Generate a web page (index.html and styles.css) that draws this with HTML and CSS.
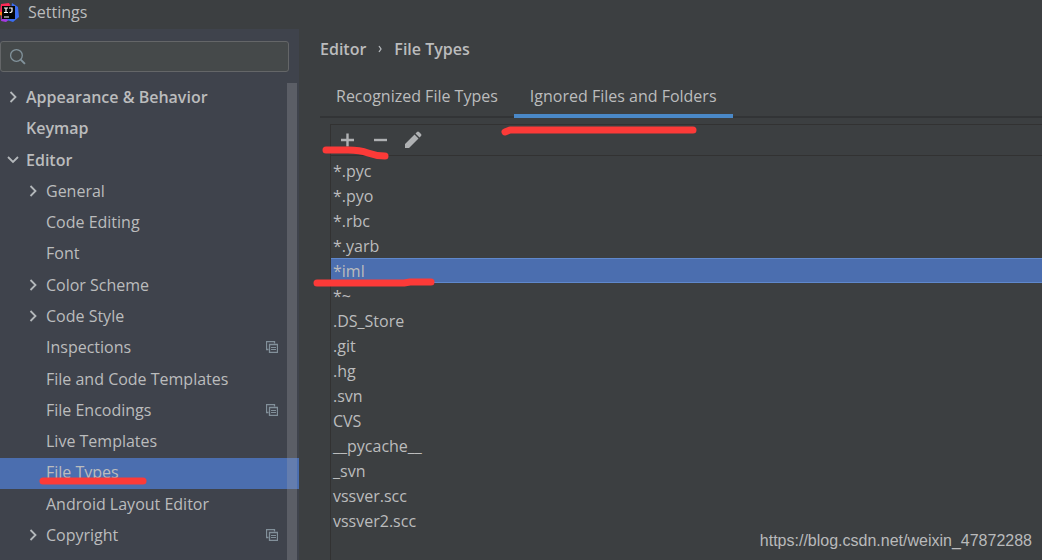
FILE: index.html
```html
<!DOCTYPE html>
<html lang="en">
<head>
<meta charset="utf-8">
<meta name="viewport" content="width=device-width, initial-scale=1">
<title>Settings</title>
<link rel="stylesheet" href="styles.css">
</head>
<body>
<svg class="defs" aria-hidden="true">
  <symbol id="right" viewBox="0 0 12 12"><path d="M3.500 1l5 5-5 5" fill="none" stroke="#b4b8bb" stroke-width="1.800"/></symbol>
  <symbol id="down" viewBox="0 0 12 12"><path d="M1 3l5 5 5-5" fill="none" stroke="#b4b8bb" stroke-width="1.800"/></symbol>
  <symbol id="copy" viewBox="0 0 12 12"><path d="M2.500 8.500H.5V.5h8v2" fill="none" stroke="#82909a" stroke-width="1.300"/><path d="M3.500 3.500h8v8h-8z" fill="none" stroke="#82909a" stroke-width="1.300"/><path d="M5 6.500h5M5 8.500h5" stroke="#82909a" stroke-width="1.200"/></symbol>
</svg>
<div class="window">
  <header class="titlebar">
    <svg class="logo" viewBox="0 0 20 20" aria-hidden="true">
      <path d="M1 2L9 1l4 8-8 9-4-2 1-4-2-2z" fill="#fe2857"/>
      <path d="M0 10l5 0v5l-5-2z" fill="#f97a12"/>
      <path d="M1 19l1-6 8 4-4 3z" fill="#a53ae0"/>
      <path d="M12 1l6 4 1 10-6 5-6-2 4-10z" fill="#3a6cf0"/>
      <path d="M2 4h13v13H2z" fill="#050505"/>
      <path d="M4 6h4M6 6v4.500M4 10.500h4M9 6h3v3q0 1.500-2.500 1.500M4 15h5" fill="none" stroke="#fff" stroke-width="1.200"/>
    </svg>
    <h1 class="title">Settings</h1>
  </header>
  <div class="body">
    <aside class="sidebar">
      <div class="search">
        <svg class="search-icon" viewBox="0 0 16 16" aria-hidden="true"><circle cx="7" cy="7" r="5.500" fill="none" stroke="#82939c" stroke-width="1.200"/><path d="M11 11l4 4" stroke="#82939c" stroke-width="1.800"/></svg>
        <input class="search-input" type="text" aria-label="Search settings">
      </div>
      <nav class="tree-pane" aria-label="Settings categories">
        <ul class="tree">
          <li><a class="row top" href="#"><svg class="arrow"><use href="#right"/></svg><span class="label">Appearance &amp; Behavior</span></a></li>
          <li><a class="row top" href="#"><span class="arrow"></span><span class="label">Keymap</span></a></li>
          <li><a class="row top" href="#"><svg class="arrow"><use href="#down"/></svg><span class="label">Editor</span></a></li>
          <li><a class="row" href="#"><svg class="arrow"><use href="#right"/></svg><span class="label">General</span></a></li>
          <li><a class="row" href="#"><span class="arrow"></span><span class="label">Code Editing</span></a></li>
          <li><a class="row" href="#"><span class="arrow"></span><span class="label">Font</span></a></li>
          <li><a class="row" href="#"><svg class="arrow"><use href="#right"/></svg><span class="label">Color Scheme</span></a></li>
          <li><a class="row" href="#"><svg class="arrow"><use href="#right"/></svg><span class="label">Code Style</span></a></li>
          <li><a class="row" href="#"><span class="arrow"></span><span class="label">Inspections</span><svg class="copy"><use href="#copy"/></svg></a></li>
          <li><a class="row" href="#"><span class="arrow"></span><span class="label">File and Code Templates</span></a></li>
          <li><a class="row" href="#"><span class="arrow"></span><span class="label">File Encodings</span><svg class="copy"><use href="#copy"/></svg></a></li>
          <li><a class="row" href="#"><span class="arrow"></span><span class="label">Live Templates</span></a></li>
          <li><a class="row selected" href="#" aria-current="page"><span class="arrow"></span><span class="label">File Types</span></a></li>
          <li><a class="row" href="#"><span class="arrow"></span><span class="label">Android Layout Editor</span></a></li>
          <li><a class="row" href="#"><svg class="arrow"><use href="#right"/></svg><span class="label">Copyright</span><svg class="copy"><use href="#copy"/></svg></a></li>
        </ul>
        <div class="scrollbar"></div>
      </nav>
    </aside>
    <main class="content">
      <div class="crumbs"><span>Editor</span><svg class="crumb-arrow" viewBox="0 0 6 10" aria-hidden="true"><path d="M2 2l2 3-2 3" fill="none" stroke="#b4b8bb" stroke-width="1.300"/></svg><span>File Types</span></div>
      <div class="tabs" role="tablist">
        <button class="tab" role="tab" aria-selected="false">Recognized File Types</button>
        <button class="tab active" role="tab" aria-selected="true">Ignored Files and Folders</button>
      </div>
      <section class="panel">
        <div class="toolbar">
          <button class="tool" aria-label="Add"><svg viewBox="0 0 20 20"><path d="M4 10h13M10.500 3.500v13" stroke="#afb1b3" stroke-width="2.400"/></svg></button>
          <button class="tool" aria-label="Remove"><svg viewBox="0 0 20 20"><path d="M4 10h13" stroke="#afb1b3" stroke-width="2.400"/></svg></button>
          <button class="tool" aria-label="Edit"><svg viewBox="0 0 20 20"><path d="M2 18v-4l9.500-9.500 4 4L6 18zM12.500 3.500l1.500-1.500q1-1 2 0l2 2q1 1 0 2l-1.500 1.500z" fill="#afb1b3"/></svg></button>
        </div>
        <ul class="files">
          <li>*.pyc</li>
          <li>*.pyo</li>
          <li>*.rbc</li>
          <li>*.yarb</li>
          <li class="chosen">*iml</li>
          <li>*~</li>
          <li>.DS_Store</li>
          <li>.git</li>
          <li>.hg</li>
          <li>.svn</li>
          <li>CVS</li>
          <li>__pycache__</li>
          <li>_svn</li>
          <li>vssver.scc</li>
          <li>vssver2.scc</li>
        </ul>
      </section>
    </main>
  </div>
  <svg class="marks" width="1042" height="560" aria-hidden="true">
    <g fill="none" stroke="#fc3a38" stroke-width="7" stroke-linecap="round" stroke-linejoin="round">
      <path d="M505 132l5-2h183"/>
      <path d="M326 150h22q12 0 20 3t17 3"/>
      <path d="M317 283h87l6-1h21"/>
      <path d="M43 481h100"/>
    </g>
  </svg>
  <div class="watermark">https://blog.csdn.net/weixin_47872288</div>
</div>
</body>
</html>
```
FILE: styles.css
```css
* { box-sizing: border-box; }
body {
  margin: 0;
  background: #3c3f41;
  color: #bbbcbd;
  font: 16px/20px "Open Sans", "Noto Sans", sans-serif;
}
ul { list-style: none; margin: 0; padding: 0; }
button { font: inherit; color: inherit; background: none; border: 0; padding: 0; }
a { color: inherit; text-decoration: none; }
.defs { position: absolute; width: 0; height: 0; }
.window {
  position: relative;
  display: flex;
  flex-direction: column;
  min-height: 100vh;
  overflow: hidden;
}
.titlebar { display: flex; align-items: center; gap: 8px; height: 29px; padding-bottom: 6px; }
.logo { width: 20px; height: 20px; }
.title { margin: 0; font-size: 16px; font-weight: 400; }
.body { display: flex; flex: 1; }
.sidebar {
  display: flex;
  flex-direction: column;
  flex: 0 0 299px;
  background: #3f434c;
}
.search {
  display: flex;
  align-items: center;
  gap: 8px;
  height: 31px;
  margin: 12px 10px 11px 0;
  padding: 0 8px;
  background: #45494a;
  border: 1px solid #646668;
  border-radius: 3px;
}
.search-icon { width: 17px; height: 17px; }
.search-input {
  flex: 1;
  min-width: 0;
  background: none;
  border: 0;
  outline: 0;
  color: inherit;
  font: inherit;
}
.tree-pane { position: relative; display: flex; flex: 1; }
.tree {
  display: flex;
  flex-direction: column;
  justify-content: space-between;
  flex: 1;
  padding-bottom: 8px;
}
.row {
  display: flex;
  align-items: center;
  gap: 7px;
  height: 31px;
  padding: 0 21px 3px 27px;
}
.row.top { padding-left: 7px; font-weight: 600; }
.row.selected { background: #4b6eaf; }
.arrow { flex: none; width: 12px; height: 12px; }
.label { flex: 1; }
.copy { width: 12px; height: 12px; }
.scrollbar {
  position: absolute;
  top: 0;
  right: 2px;
  bottom: 0;
  width: 10px;
  background: rgba(166, 166, 174, 0.28);
}
.content { display: flex; flex-direction: column; flex: 1; min-width: 0; padding-left: 21px; }
.crumbs {
  display: flex;
  align-items: center;
  gap: 11px;
  padding: 10px 0 18px;
  font-weight: 600;
}
.crumb-arrow { width: 6px; height: 10px; }
.tabs { display: flex; border-bottom: 2px solid #323436; }
.tab { height: 41px; margin-bottom: -2px; padding: 0 16px; border-bottom: 4px solid transparent; }
.tab.active { border-color: #4a88c7; }
.panel { flex: 1; margin: 6px 0 0 10px; border: solid #323232; border-width: 1px 0 0 1px; }
.toolbar {
  display: flex;
  align-items: center;
  gap: 13px;
  height: 31px;
  padding-left: 6px;
  border-bottom: 1px solid #323232;
}
.tool { width: 20px; height: 20px; }
.tool svg { display: block; width: 20px; height: 20px; }
.files { padding-top: 2px; }
.files li { height: 25px; padding: 2px; border: solid transparent; border-width: 1px 0; }
.files .chosen { background: #4b6eaf; border-color: #5f88cc; }
.marks { position: absolute; left: 0; top: 0; pointer-events: none; }
.watermark {
  position: absolute;
  right: 10px;
  bottom: 9px;
  color: #b9babb;
  font: 16px/20px "Liberation Sans", sans-serif;
}
```
